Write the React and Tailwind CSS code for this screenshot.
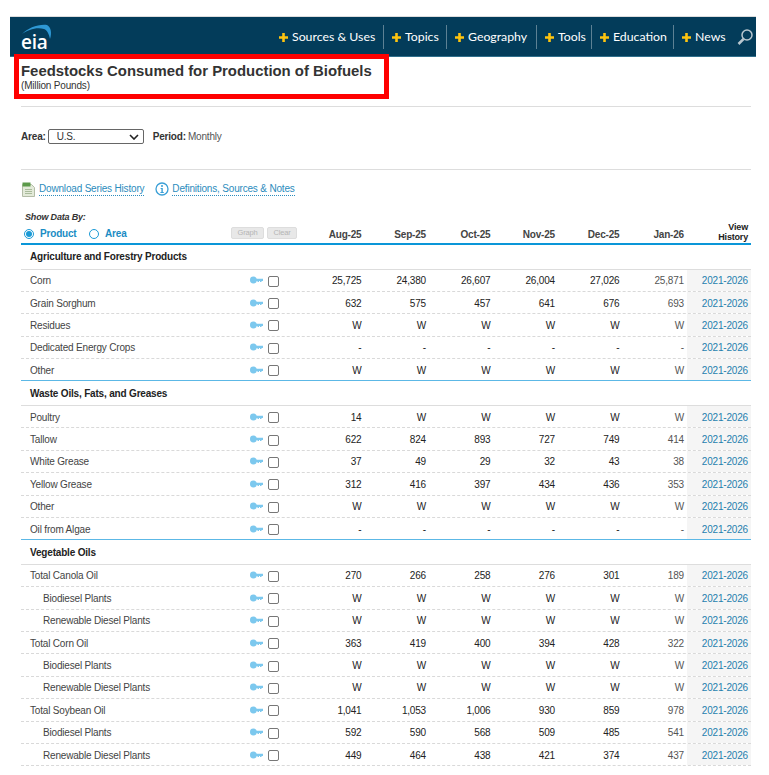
import React from "react";

const navItems = [
  { label: "Sources & Uses", width: "w-[84px]" },
  { label: "Topics", width: "w-[34px]" },
  { label: "Geography", width: "w-[61px]" },
  { label: "Tools", width: "w-[26px]" },
  { label: "Education", width: "w-[53px]" },
  { label: "News", width: "w-[30px]" },
];
const months = ["Aug-25", "Sep-25", "Oct-25", "Nov-25", "Dec-25", "Jan-26"];

const W = ["W", "W", "W", "W", "W", "W"];
const D = ["-", "-", "-", "-", "-", "-"];

const groups = [
  {
    title: "Agriculture and Forestry Products",
    rows: [
      { name: "Corn", v: ["25,725", "24,380", "26,607", "26,004", "27,026", "25,871"] },
      { name: "Grain Sorghum", v: ["632", "575", "457", "641", "676", "693"] },
      { name: "Residues", v: W },
      { name: "Dedicated Energy Crops", v: D },
      { name: "Other", v: W },
    ],
  },
  {
    title: "Waste Oils, Fats, and Greases",
    rows: [
      { name: "Poultry", v: ["14", "W", "W", "W", "W", "W"] },
      { name: "Tallow", v: ["622", "824", "893", "727", "749", "414"] },
      { name: "White Grease", v: ["37", "49", "29", "32", "43", "38"] },
      { name: "Yellow Grease", v: ["312", "416", "397", "434", "436", "353"] },
      { name: "Other", v: W },
      { name: "Oil from Algae", v: D },
    ],
  },
  {
    title: "Vegetable Oils",
    rows: [
      { name: "Total Canola Oil", v: ["270", "266", "258", "276", "301", "189"] },
      { name: "Biodiesel Plants", sub: true, v: W },
      { name: "Renewable Diesel Plants", sub: true, v: W },
      { name: "Total Corn Oil", v: ["363", "419", "400", "394", "428", "322"] },
      { name: "Biodiesel Plants", sub: true, v: W },
      { name: "Renewable Diesel Plants", sub: true, v: W },
      { name: "Total Soybean Oil", v: ["1,041", "1,053", "1,006", "930", "859", "978"] },
      { name: "Biodiesel Plants", sub: true, v: ["592", "590", "568", "509", "485", "541"] },
      { name: "Renewable Diesel Plants", sub: true, v: ["449", "464", "438", "421", "374", "437"] },
    ],
  },
];

function Plus() {
  return (
    <svg width="9" height="9" viewBox="0 0 9 9" className="shrink-0">
      <path d="M3.2 0h2.6v3.2H9v2.6H5.8V9H3.2V5.8H0V3.2h3.2z" fill="#fdc410" />
    </svg>
  );
}

function KeyIcon() {
  return (
    <svg width="13" height="8" viewBox="0 0 13 8" className="-mt-[1px]">
      <circle cx="3.4" cy="4" r="3.4" fill="#7cc8ee" />
      <path d="M5 2.8h8v2.2h-1.5v1H10V5H9v1H7.5V5H5z" fill="#7cc8ee" />
    </svg>
  );
}

function Row({ row, last }) {
  return (
    <div className={`flex items-center h-[22.4px] pt-[1px] border-b ${last ? "border-solid border-b-[#5cb8e6]" : "border-dashed border-b-[#d9d9d9]"}`}>
      <div className={`w-[227px] text-[#444] ${row.sub ? "pl-[22px]" : "pl-[9px]"}`}>{row.name}</div>
      <div className="w-[49px] flex items-center pl-[2px] gap-[5px]">
        <KeyIcon />
        <input type="checkbox" readOnly className="appearance-none w-[11px] h-[11px] mt-[1px] border border-[#777] rounded-[2px] bg-white" />
      </div>
      {row.v.map((val, i) => (
        <div key={i} className={`w-[64.5px] text-right ${i === 5 ? "text-[#555]" : "text-[#222]"}`}>{val}</div>
      ))}
      <div className="ml-[3px] w-[64px] self-stretch -mt-[1px] pt-[1px] bg-[#f5f5f5] pr-[3px] flex items-center justify-end text-[#1f7fae]">2021-2026</div>
    </div>
  );
}

export default function App() {
  return (
    <div className="relative w-[769px] h-[775px] overflow-hidden bg-white pt-[16px] pl-[10px] text-[10px] tracking-[-0.18px] font-['Liberation_Sans',Arial,sans-serif]">
      {/* top bar */}
      <div className="w-[746px] h-[41px] overflow-hidden bg-[#033c5a] border-t border-t-[#ddd] border-b border-b-[#2f6f8c] flex items-center tracking-normal">
        <div className="relative w-[50px] h-full ml-[10px] shrink-0">
          <svg width="36" height="26" viewBox="0 0 36 26" className="absolute left-0 top-[7px]">
            <path d="M2 10C8 4 18 0 27 1c4 2 5 8 3 14-1-5-3-9-6-10C16 3 8 6 2 10z" fill="#2e98d4" />
          </svg>
          <span className="absolute left-[1px] top-[13px] text-white font-semibold text-[19px] leading-[24px] font-['Open_Sans',sans-serif] tracking-[-0.3px]">eia</span>
        </div>
        <nav className="flex items-center shrink-0 ml-[209px] pt-[1px] font-['Lato',sans-serif] text-[12.3px] text-white whitespace-nowrap">
          {navItems.map((item, i) => (
            <div key={item.label} className={`flex items-center shrink-0 gap-[4px] h-[24px] pr-[7px] mr-[8px] ${i < 5 ? "border-r border-[#5d8194]" : ""}`}>
              <Plus />
              <span className={item.width}>{item.label}</span>
            </div>
          ))}
        </nav>
        <svg width="18" height="18" viewBox="0 0 18 18" className="shrink-0 -ml-[3px]" fill="none" stroke="#b9c7cf">
          <circle cx="10" cy="7" r="5" strokeWidth="1.5" />
          <path d="M6.5 11 1.5 16" strokeWidth="2.5" />
        </svg>
      </div>

      <div className="w-[730px] ml-[11px]">
        {/* title */}
        <div className="h-[50px] border-b border-[#ddd] pt-[5px]">
          <h1 className="text-[14.9px] leading-[18px] font-bold tracking-normal text-[#333]">Feedstocks Consumed for Production of Biofuels</h1>
          <p className="leading-[11px] text-[#333]">(Million Pounds)</p>
        </div>

        {/* area / period */}
        <div className="h-[63px] border-b border-[#ddd] flex items-center pb-[3px]">
          <span className="font-bold text-[#333] mr-[2px]">Area:</span>
          <div className="w-[96px] h-[15px] border border-[#666] rounded-[2px] flex items-center justify-between pl-[8px] pr-[4px] text-[#333]">
            <span>U.S.</span>
            <svg width="10" height="6" viewBox="0 0 10 6" fill="none" stroke="#222" strokeWidth="1.6">
              <path d="M1 1l4 4 4-4" />
            </svg>
          </div>
          <span className="font-bold text-[#333] ml-[9px] mr-[2px]">Period:</span>
          <span className="text-[#555]">Monthly</span>
        </div>

        {/* links */}
        <div className="h-[38px] flex items-center text-[#2b8cbd]">
          <svg width="13" height="15" viewBox="0 0 13 15" className="ml-[1px] mr-[4px]">
            <path d="M.5 2.5h9l3 3v9H.5z" fill="#e3ead9" stroke="#b3bca7" />
            <rect x="0.5" y="0.5" width="8" height="4" fill="#5c9a4a" />
            <path d="M3 7.5h7M3 9.5h7M3 11.5h7" stroke="#a9bb9b" />
          </svg>
          <a className="border-b border-dotted border-[#2b8cbd] leading-[12px]">Download Series History</a>
          <svg width="14" height="14" viewBox="0 0 14 14" className="ml-[11px] mr-[3px]">
            <circle cx="7" cy="7" r="6" fill="none" stroke="#3a9fd6" strokeWidth="1.3" />
            <circle cx="7" cy="4" r="1" fill="#3a9fd6" />
            <path d="M5.6 6h2.2v4h1v1H5.4v-1h1V7h-.8z" fill="#3a9fd6" />
          </svg>
          <a className="border-b border-dotted border-[#2b8cbd] leading-[12px]">Definitions, Sources &amp; Notes</a>
        </div>

        {/* table header */}
        <div className="h-[37px] flex items-end border-b-[2.5px] border-[#0a96d8]">
          <div className="w-[210px] pb-[3px] pl-[3px]">
            <div className="italic font-bold text-[9px] leading-[11px] text-[#333] mb-[5px] pl-[1px]">Show Data By:</div>
            <div className="flex items-center font-bold text-[#1a8cc4] leading-[12px]">
              <span className="w-[10px] h-[10px] rounded-full border border-[#1a9ad6] flex items-center justify-center mr-[6px]">
                <span className="w-[6px] h-[6px] rounded-full bg-[#1a9ad6]" />
              </span>
              <span className="w-[36px] mr-[13px] whitespace-nowrap">Product</span>
              <span className="w-[10px] h-[10px] rounded-full border border-[#1a9ad6] mr-[6px]" />
              <span>Area</span>
            </div>
          </div>
          <div className="w-[66px] flex gap-[3px] pb-[4px] text-[7.5px] text-[#b5b5b5]">
            <button className="w-[33px] h-[12px] bg-[#e8e8e8] border border-[#ddd] rounded-[2px] leading-[10px]">Graph</button>
            <button className="w-[30px] h-[12px] bg-[#e8e8e8] border border-[#ddd] rounded-[2px] leading-[10px]">Clear</button>
          </div>
          {months.map((m) => (
            <div key={m} className="w-[64.5px] text-right font-bold text-[#444] pb-[1px]">{m}</div>
          ))}
          <div className="ml-[3px] w-[64px] pr-[3px] text-right font-bold text-[#222] text-[9px] leading-[10px] pb-[1px]">
            View<br />History
          </div>
        </div>

        {/* table body */}
        {groups.map((g) => (
          <div key={g.title}>
            <div className="h-[24.5px] flex items-center pl-[9px] font-bold text-[#222] border-b border-[#ddd]">{g.title}</div>
            {g.rows.map((row, i) => (
              <Row key={i} row={row} last={i === g.rows.length - 1 && g.title !== "Vegetable Oils"} />
            ))}
          </div>
        ))}
      </div>

      {/* red highlight over the title */}
      <div className="absolute left-[14px] top-[54px] w-[375px] h-[45px] border-[5px] border-[#ff0000]" />
    </div>
  );
}
